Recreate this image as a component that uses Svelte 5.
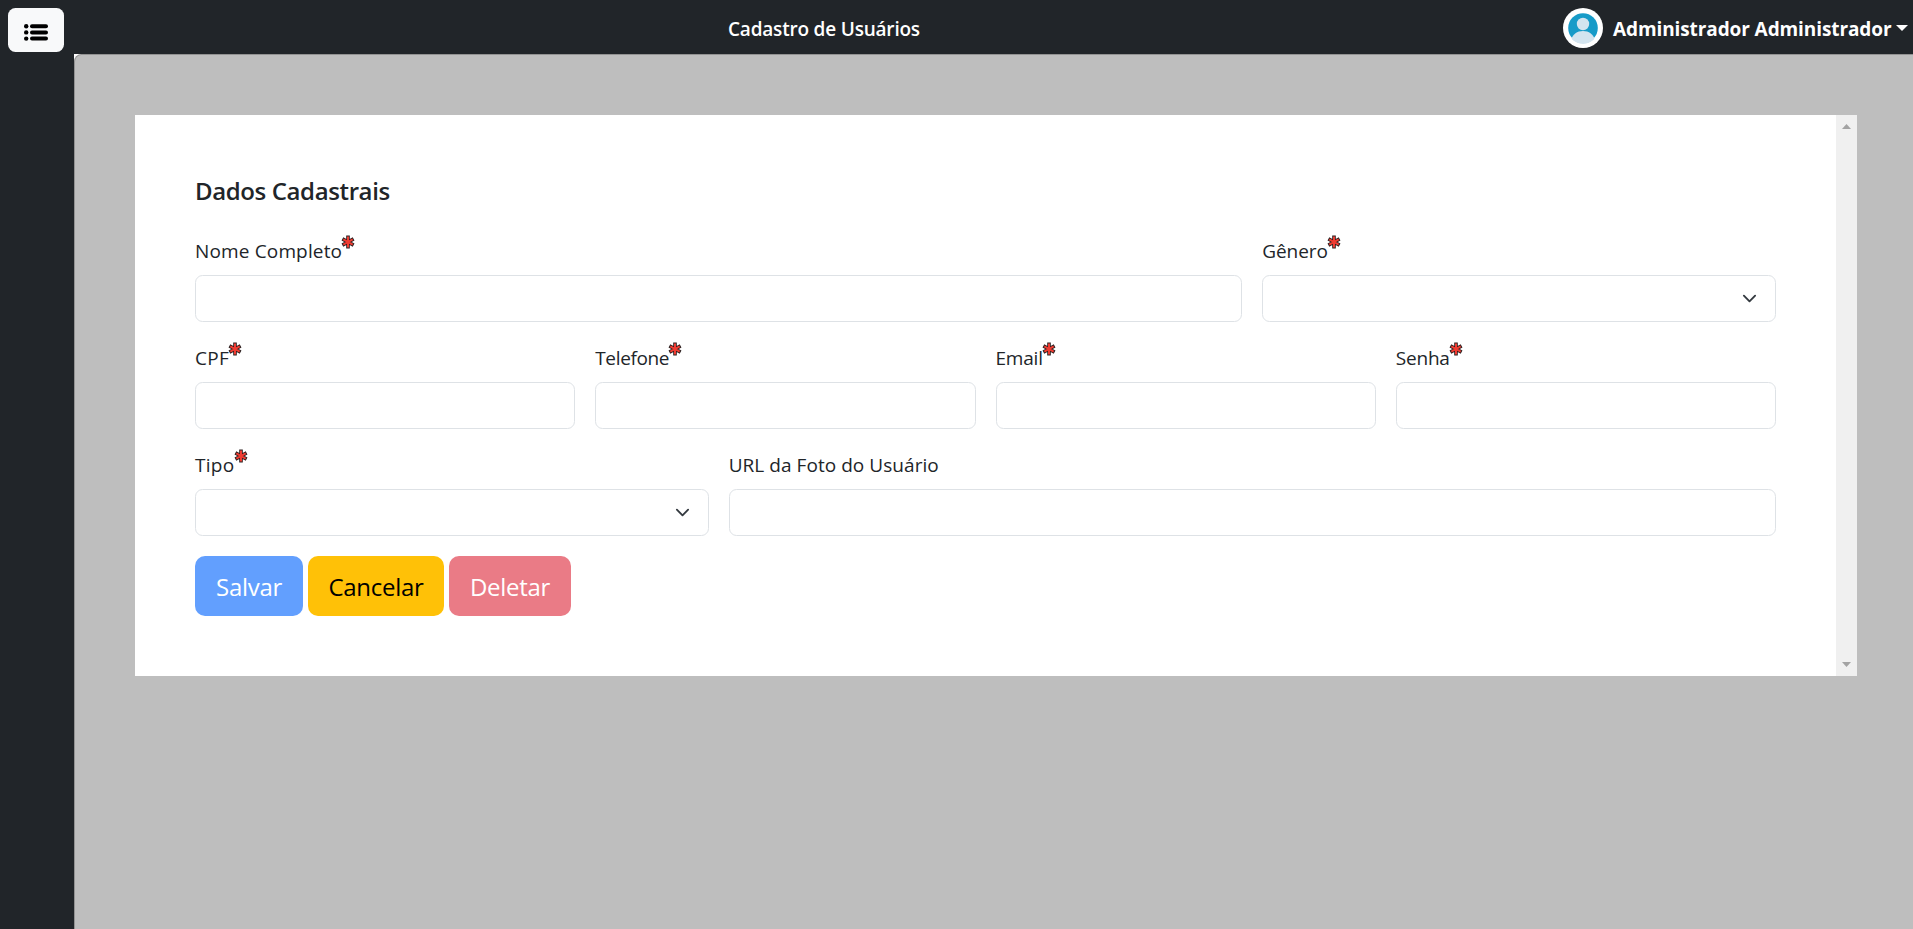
<script>
  const rows = [
    [
      { id: 'nome', label: 'Nome Completo', required: true, span: 8 },
      { id: 'genero', label: 'Gênero', required: true, span: 4, select: true }
    ],
    [
      { id: 'cpf', label: 'CPF', required: true, span: 3 },
      { id: 'telefone', label: 'Telefone', required: true, span: 3 },
      { id: 'email', label: 'Email', required: true, span: 3 },
      { id: 'senha', label: 'Senha', required: true, span: 3 }
    ],
    [
      { id: 'tipo', label: 'Tipo', required: true, span: 4, select: true },
      { id: 'foto', label: 'URL da Foto do Usuário', required: false, span: 8 }
    ]
  ];
</script>

<div class="page">
  <header>
    <button class="toggle" aria-label="Menu">
      <svg width="24" height="17" viewBox="0 0 24 17">
        <g fill="#000">
          <circle cx="2.2" cy="2.2" r="2.2" /><rect x="6" y="0.2" width="18" height="4" rx="2" />
          <circle cx="2.2" cy="8.4" r="2.2" /><rect x="6" y="6.4" width="18" height="4" rx="2" />
          <circle cx="2.2" cy="14.6" r="2.2" /><rect x="6" y="12.6" width="18" height="4" rx="2" />
        </g>
      </svg>
    </button>
    <div class="title"><span>Cadastro de Usuários</span></div>
    <div class="user">
      <svg class="avatar" width="40" height="40" viewBox="0 0 40 40">
        <defs><clipPath id="face"><circle cx="20" cy="20" r="16" /></clipPath></defs>
        <circle cx="20" cy="20" r="20" fill="#fff" />
        <circle cx="20" cy="20" r="14.8" fill="#179bc8" />
        <g clip-path="url(#face)" fill="#d3e4ef">
          <circle cx="20" cy="16" r="6.2" />
          <path d="M8.500 31C9.800 26.500 14 23 20 23s10.200 3.500 11.500 8c-3 3.500-7 5-11.500 5s-8.500-1.500-11.500-5z" />
        </g>
      </svg>
      <strong>Administrador Administrador</strong>
      <i class="caret"></i>
    </div>
  </header>
  <div class="body">
    <aside></aside>
    <div class="corner">
      <main>
        <div class="card">
          <form>
            <h5>Dados Cadastrais</h5>
            {#each rows as row}
              <div class="row">
                {#each row as field}
                  <div class="field span-{field.span}">
                    <label for={field.id}>
                      <span class="text {field.id}">{field.label}</span>
                      {#if field.required}
                        <svg class="star" width="14" height="14" viewBox="0 0 14 14" fill="none">
                          <path d="M7 .6v12.800M1.400 3.900l11.200 6.200M12.600 3.900L1.400 10.100" stroke="#2c2020" stroke-width="3.600" />
                          <path d="M7 1.600v10.800M2.300 4.400l9.400 5.200M11.700 4.400L2.300 9.600" stroke="#f03c32" stroke-width="2" />
                        </svg>
                      {/if}
                    </label>
                    {#if field.select}
                      <div class="select" id={field.id}>
                        <svg width="20" height="20" viewBox="0 0 16 16">
                          <path d="m2 5 6 6 6-6" fill="none" stroke="#343a40" stroke-width="2" stroke-linecap="round" stroke-linejoin="round" />
                        </svg>
                      </div>
                    {:else}
                      <input id={field.id} />
                    {/if}
                  </div>
                {/each}
              </div>
            {/each}
            <div class="actions">
              <button type="button" class="save">Salvar</button>
              <button type="button" class="cancel">Cancelar</button>
              <button type="button" class="delete">Deletar</button>
            </div>
          </form>
          <div class="scroll">
            <svg width="9" height="5" viewBox="0 0 9 5"><path d="M0 5L4.500 0 9 5z" fill="#a3a3a3" /></svg>
            <svg width="9" height="5" viewBox="0 0 9 5"><path d="M0 0h9L4.500 5z" fill="#a3a3a3" /></svg>
          </div>
        </div>
      </main>
    </div>
  </div>
</div>

<style>
  :global(body) { margin: 0; overflow: hidden; }
  * { box-sizing: border-box; }
  .page {
    height: 929px;
    display: flex;
    flex-direction: column;
    background: #212529;
    color: #212529;
    font-family: 'Open Sans', 'Noto Sans', sans-serif;
    font-size: 19px;
  }
  header { height: 54px; flex: none; display: flex; align-items: flex-start; color: #fff; padding: 8px 5px 0 8px; }
  .toggle {
    width: 56px; height: 44px; border: 0; border-radius: 7.5px; padding: 4px 0 0;
    background: #f8f9fa; display: flex; align-items: center; justify-content: center;
  }
  .title { flex: 1; padding-left: 664px; line-height: 43px; font-weight: 600; white-space: nowrap; }
  .title span { letter-spacing: -0.2px; }
  .user { display: flex; align-items: center; height: 40px; }
  .user strong { font-weight: 700; margin-left: 10px; width: 278px; white-space: nowrap; line-height: 40px; padding-top: 2px; letter-spacing: -0.1px; }
  .caret { margin-left: 5px; border: 6px solid transparent; border-top-color: #fff; border-bottom: 0; }
  .body { flex: 1; display: flex; }
  aside { width: 74px; }
  .corner { flex: 1; background: #fff; display: flex; }
  main {
    flex: 1; background: #bebebe; border: 1px solid #929292; border-width: 1px 0 0 1px;
    border-top-left-radius: 7.5px; padding: 60px 56px 0 60px;
  }
  .card { height: 561px; display: flex; background: #fff; }
  form { flex: 1; padding: 60px 60px 0; }
  .scroll {
    width: 21px; background: #f0f0f0; padding: 9px 0; display: flex; flex-direction: column;
    align-items: center; justify-content: space-between;
  }
  h5 { margin: 0; height: 40px; font-size: 24px; line-height: 31px; font-weight: 600; letter-spacing: -0.38px; white-space: nowrap; }
  .row { display: grid; grid-template-columns: repeat(12, 1fr); column-gap: 20px; height: 107px; }
  .span-3 { grid-column: span 3; }
  .span-4 { grid-column: span 4; }
  .span-8 { grid-column: span 8; }
  label { display: flex; height: 60px; padding-top: 21px; line-height: 30px; white-space: nowrap; }
  .text.nome { letter-spacing: 0.15px; }
  .text.genero { letter-spacing: -0.1px; }
  .text.cpf { letter-spacing: 0.3px; }
  .text.telefone { letter-spacing: -0.35px; }
  .text.email, .text.senha { letter-spacing: -0.2px; }
  .text.tipo { letter-spacing: 0.3px; }
  .text.foto { letter-spacing: 0.05px; }
  .star { margin: -1px 0 0 -1px; }
  input, .select {
    display: block; width: 100%; height: 47px; border: 1px solid #dee2e6; border-radius: 7.5px;
    background: #fff; padding: 0 15px; outline: 0;
  }
  .select { display: flex; align-items: center; justify-content: flex-end; }
  .select svg { width: 15px; height: 15px; margin-right: 2.500px; }
  .actions { display: flex; gap: 5px; padding-top: 20px; }
  .actions button {
    border: 0; height: 60px; border-radius: 10px; padding: 0; color: #fff;
    font-family: inherit; font-size: 24px; letter-spacing: -0.3px;
  }
  .actions .save { width: 108px; background: #629ffe; }
  .actions .cancel { width: 136px; background: #ffc107; color: #000; }
  .actions .delete { width: 122px; background: #ea7b86; }
</style>
